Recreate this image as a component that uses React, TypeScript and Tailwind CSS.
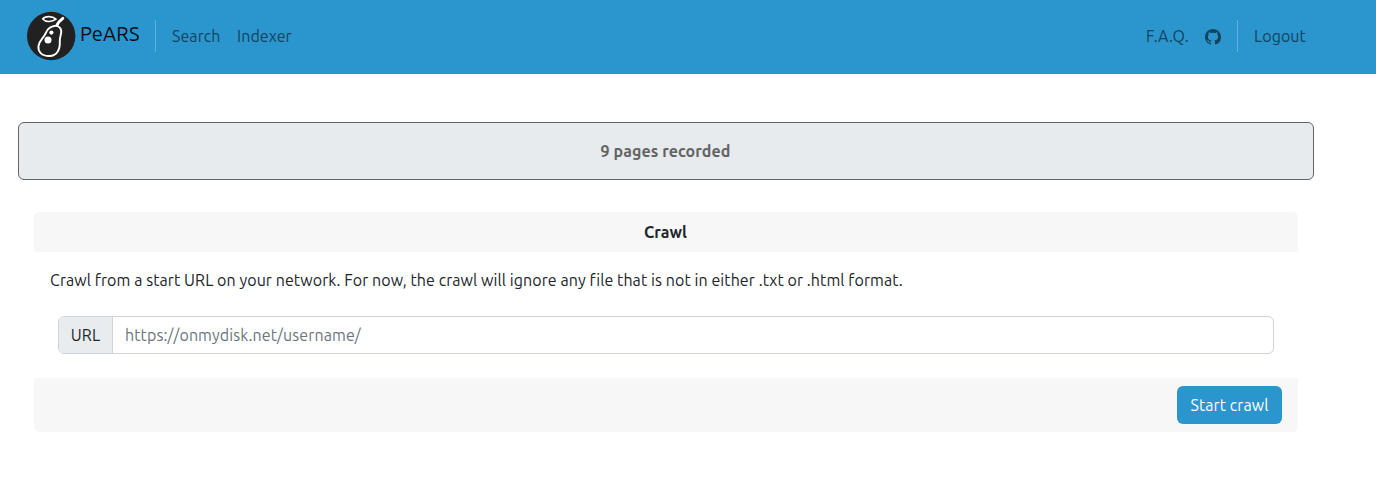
import React from "react";

function PearLogo() {
  return (
    <svg className="size-[50px] shrink-0" viewBox="0 0 50 50" fill="none">
      <circle cx="25.2" cy="25" r="24.2" fill="#212121" />
      <g stroke="#fff" strokeLinecap="round" strokeLinejoin="round">
        <path d="M16.700 8C19 5 26 4.500 30 8.200C26 11.400 19.500 11.200 16.700 8Z" strokeWidth="1.600" />
        <path d="M31 14C32.200 11.500 34.500 9.200 36.800 7.400" strokeWidth="3" />
        <path
          d="M28 15C32.500 14.200 35.800 17.200 35.200 21.500C34.700 25 33.600 27 33.800 30.500C34.200 38.500 31 44.800 23.500 45C15.500 45.200 11.700 40.500 12.500 35C13.200 29.800 17 27.500 19 23.500C21 19.500 22.500 16 28 15Z"
          strokeWidth="1.900"
        />
      </g>
      <circle cx="25.400" cy="21.600" r="2.100" fill="#fff" />
      <circle cx="22" cy="29" r="3.500" fill="#fff" />
    </svg>
  );
}

function GithubMark() {
  return (
    <svg className="size-4" viewBox="0 0 16 16" fill="currentColor">
      <path d="M8 0C3.58 0 0 3.58 0 8c0 3.54 2.290 6.530 5.470 7.590.4.070.55-.17.55-.38 0-.19-.01-.82-.01-1.490-2.010.37-2.530-.49-2.690-.94-.09-.23-.48-.94-.82-1.130-.28-.15-.68-.52-.01-.53.63-.01 1.080.58 1.230.82.72 1.210 1.870.87 2.330.66.07-.52.28-.87.51-1.070-1.780-.2-3.640-.89-3.640-3.950 0-.87.31-1.590.82-2.150-.08-.2-.36-1.020.08-2.120 0 0 .67-.21 2.200.82.64-.18 1.320-.27 2-.27s1.360.09 2 .27c1.530-1.040 2.200-.82 2.200-.82.44 1.100.16 1.920.08 2.120.51.56.82 1.270.82 2.150 0 3.070-1.870 3.750-3.650 3.950.29.25.54.73.54 1.480 0 1.070-.01 1.930-.01 2.200 0 .21.15.46.55.38A8.010 8.010 0 0 0 16 8c0-4.420-3.580-8-8-8" />
    </svg>
  );
}

export default function App() {
  return (
    <div className="min-h-[483px] bg-white font-['Ubuntu','Noto_Sans',sans-serif] text-base leading-6 tracking-[0.075px] text-[#212529]">
      <nav className="flex h-[74px] items-center bg-[#2b96cd] pr-[71px] pb-0.5 pl-[26px] text-[#12445e]">
        <a className="flex items-center gap-1 text-[#060c10]">
          <PearLogo />
          <span className="w-[60px] pb-1 text-xl tracking-[0.2px] whitespace-nowrap">PeARS</span>
        </a>
        <span className="ml-[15px] h-8 w-px bg-[#5db2df]" />
        <a className="ml-4 w-[49px] whitespace-nowrap">Search</a>
        <a className="ml-4 whitespace-nowrap">Indexer</a>
        <div className="ml-auto flex items-center">
          <a className="w-[43px] whitespace-nowrap">F.A.Q.</a>
          <a className="ml-4 pt-0.5">
            <GithubMark />
          </a>
          <span className="ml-4 h-8 w-px bg-[#5db2df]" />
          <a className="ml-4 w-[51px] whitespace-nowrap">Logout</a>
        </div>
      </nav>
      <main className="mr-[62px] ml-[18px] pt-12">
        <div className="flex h-[58px] items-center justify-center rounded-md border border-[#636464] bg-[#e7ebee] pr-px font-bold text-[#636464]">
          <span>9 pages recorded</span>
        </div>
        <section className="mx-4 mt-8">
          <header className="flex h-10 items-center justify-center rounded-t-[5px] bg-[#f7f7f7] pr-px font-bold">
            <span>Crawl</span>
          </header>
          <div className="px-4 pt-4 pb-6">
            <p className="whitespace-nowrap">
              Crawl from a start URL on your network. For now, the crawl will ignore any file that is not in either .txt or .html format.
            </p>
            <div className="mx-2 mt-6 flex h-[38px] overflow-hidden rounded-md border border-[#ced4da]">
              <label htmlFor="url" className="flex w-[54px] items-center justify-center border-r border-[#ced4da] bg-[#e9ecef]">
                URL
              </label>
              <input
                id="url"
                className="min-w-0 flex-1 px-3 tracking-[0.1px] outline-none placeholder:text-[#6c757d]"
                placeholder="https://onmydisk.net/username/"
              />
            </div>
          </div>
          <footer className="flex h-[54px] items-center justify-end rounded-b-[5px] bg-[#f7f7f7] px-4">
            <button className="h-[38px] w-[105px] rounded-md bg-[#2b96cd] whitespace-nowrap text-white">Start crawl</button>
          </footer>
        </section>
      </main>
    </div>
  );
}
